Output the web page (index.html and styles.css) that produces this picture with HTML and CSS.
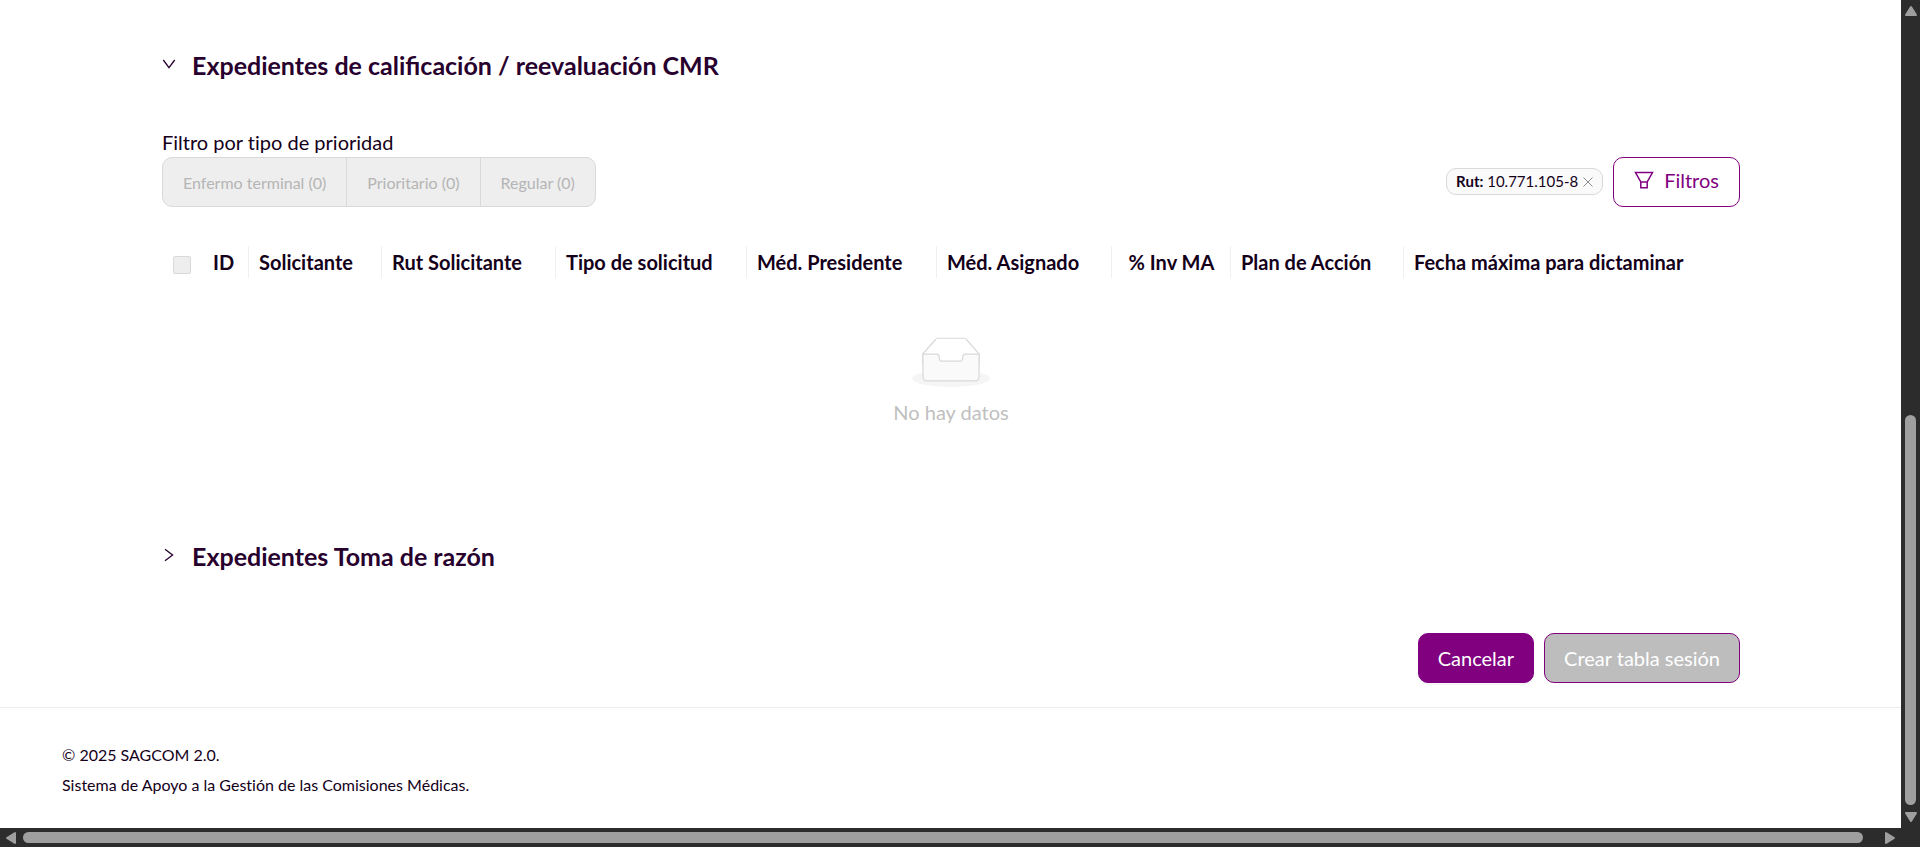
FILE: index.html
```html
<!DOCTYPE html>
<html lang="es">
<head>
<meta charset="utf-8">
<title>SAGCOM 2.0</title>
<link rel="stylesheet" href="styles.css">
</head>
<body>
<div class="window">
  <div class="page">
    <main class="content">
      <section class="panel">
        <h2 class="panel-title">
          <button class="panel-toggle" type="button" aria-expanded="true">
            <svg class="chevron" viewBox="0 0 14 14" aria-hidden="true"><path d="M1.3 3 7 10.6 12.7 3"/></svg>
            <span>Expedientes de calificación / reevaluación CMR</span>
          </button>
        </h2>
        <div class="panel-body">
          <p class="filter-label" id="priority-label">Filtro por tipo de prioridad</p>
          <div class="toolbar">
            <div class="segmented" role="group" aria-labelledby="priority-label">
              <button type="button" disabled>Enfermo terminal (0)</button>
              <button type="button" disabled>Prioritario (0)</button>
              <button type="button" disabled>Regular (0)</button>
            </div>
            <div class="filters">
              <span class="tag"><span><b>Rut:</b> 10.771.105-8</span>
                <button class="tag-close" type="button" aria-label="Quitar filtro"><svg viewBox="0 0 10 10" aria-hidden="true"><path d="M.5.5 9.5 9.5M9.5.5.5 9.5"/></svg></button>
              </span>
              <button class="btn btn-outline" type="button">
                <svg class="funnel" viewBox="0 0 20 20" aria-hidden="true"><path d="M1.5 2.5H18.5L13.2 12V17.7H6.8V12ZM6.8 12H13.2"/></svg>
                <span>Filtros</span>
              </button>
            </div>
          </div>
          <table class="records">
            <colgroup>
              <col class="c-check"><col class="c-id"><col class="c-name"><col class="c-rut"><col class="c-type"><col class="c-chair"><col class="c-assigned"><col class="c-inv"><col class="c-plan"><col>
            </colgroup>
            <thead>
              <tr>
                <th class="check"><input type="checkbox" aria-label="Seleccionar todo" disabled></th>
                <th>ID</th>
                <th>Solicitante</th>
                <th>Rut Solicitante</th>
                <th>Tipo de solicitud</th>
                <th>Méd. Presidente</th>
                <th>Méd. Asignado</th>
                <th class="center">% Inv MA</th>
                <th>Plan de Acción</th>
                <th>Fecha máxima para dictaminar</th>
              </tr>
            </thead>
            <tbody>
              <tr>
                <td colspan="10">
                  <div class="empty">
                    <svg class="empty-icon" viewBox="0 0 64 41" aria-hidden="true">
                      <g transform="translate(0 1)" fill="none" fill-rule="evenodd">
                        <ellipse fill="#f5f5f5" cx="32" cy="33" rx="32" ry="7"/>
                        <g fill-rule="nonzero" stroke="#d9d9d9">
                          <path d="M55 12.76L44.854 1.258C44.367.474 43.656 0 42.907 0H21.093c-.749 0-1.46.474-1.947 1.257L9 12.761V22h46v-9.24z"/>
                          <path fill="#fafafa" d="M41.613 15.931c0-1.605.994-2.93 2.227-2.931H55v18.137C55 33.26 53.68 35 52.05 35h-40.1C10.32 35 9 33.259 9 31.137V13h11.16c1.233 0 2.227 1.323 2.227 2.928v.022c0 1.605 1.005 2.901 2.237 2.901h14.752c1.232 0 2.237-1.308 2.237-2.913v-.007z"/>
                        </g>
                      </g>
                    </svg>
                    <span>No hay datos</span>
                  </div>
                </td>
              </tr>
            </tbody>
          </table>
        </div>
      </section>
      <section class="panel">
        <h2 class="panel-title">
          <button class="panel-toggle" type="button" aria-expanded="false">
            <svg class="chevron" viewBox="0 0 14 14" aria-hidden="true"><path d="M3 1.3 10.6 7 3 12.7"/></svg>
            <span>Expedientes Toma de razón</span>
          </button>
        </h2>
      </section>
      <div class="actions">
        <button class="btn btn-primary" type="button">Cancelar</button>
        <button class="btn btn-disabled" type="button" disabled>Crear tabla sesión</button>
      </div>
    </main>
    <footer class="footer">
      <p>© 2025 SAGCOM 2.0.</p>
      <p>Sistema de Apoyo a la Gestión de las Comisiones Médicas.</p>
    </footer>
  </div>
  <div class="bar bar-v" aria-hidden="true">
    <svg class="arrow" viewBox="0 0 14 12"><path d="M7 2 12 10H2Z"/></svg>
    <div class="track"><div class="thumb"></div></div>
    <svg class="arrow" viewBox="0 0 14 12"><path d="M7 10 12 2H2Z"/></svg>
  </div>
  <div class="bar bar-h" aria-hidden="true">
    <svg class="arrow" viewBox="0 0 12 14"><path d="M2 7 10 2V12Z"/></svg>
    <div class="track"><div class="thumb"></div></div>
    <svg class="arrow" viewBox="0 0 12 14"><path d="M10 7 2 2V12Z"/></svg>
  </div>
  <div class="corner"></div>
</div>
</body>
</html>
```

FILE: styles.css
```css
* {
  box-sizing: border-box;
}

body {
  margin: 0;
  background: #fff;
  color: #14001a;
  font: 20px/30px Lato, "Open Sans", sans-serif;
  font-variant-ligatures: none;
}

button {
  font: inherit;
  font-variant-ligatures: inherit;
  color: inherit;
}

p,
h2 {
  margin: 0;
}

.window {
  display: grid;
  grid-template: minmax(0, 1fr) 19px / minmax(0, 1fr) 19px;
  height: 100vh;
}

.page {
  display: flex;
  flex-direction: column;
  overflow: hidden;
}

.content {
  flex: 1;
  padding: 45px 161px 24px 162px;
}

.panel-title {
  font-size: 25px;
  line-height: 40px;
  font-weight: 700;
  font-variant-ligatures: normal;
}

.panel-toggle {
  display: flex;
  gap: 16px;
  padding: 0;
  border: 0;
  background: none;
  color: #28002e;
}

.chevron {
  width: 14px;
  height: 14px;
  margin-top: 12px;
  fill: none;
  stroke: currentColor;
  stroke-width: 1.3;
}

.panel-body {
  padding: 43px 0 109px;
}

.toolbar {
  display: flex;
  justify-content: space-between;
  margin-bottom: 32px;
}

.filter-label {
  line-height: 29px;
}

.segmented {
  display: flex;
  height: 50px;
  border: 1px solid #d9d9d9;
  border-radius: 10px;
  background: #eee;
}

.segmented button {
  padding: 2px 20px 0;
  border: 0;
  background: none;
  color: #b5b5b5;
  font-size: 16px;
}

.segmented button + button {
  border-left: 1px solid #d9d9d9;
}

.filters {
  display: flex;
  align-items: center;
  gap: 10px;
}

.tag {
  display: flex;
  align-items: center;
  gap: 5px;
  height: 27px;
  margin-bottom: 2px;
  padding: 0 9px;
  border: 1px solid #d9d9d9;
  border-radius: 10px;
  background: #fafafa;
  font-size: 15px;
  line-height: 25px;
}

.tag-close {
  display: flex;
  padding: 2px 0 0;
  border: 0;
  background: none;
  color: #8c8c8c;
}

.tag-close svg {
  width: 10px;
  height: 10px;
  fill: none;
  stroke: currentColor;
}

.btn {
  display: flex;
  align-items: center;
  gap: 10px;
  height: 50px;
  padding: 0 19px;
  border: 1px solid #800080;
  border-radius: 10px;
}

.btn-outline {
  padding: 0 20px 4px;
  background: #fff;
  color: #800080;
}

.btn-primary {
  background: #800080;
  color: #fff;
  box-shadow: 0 2px 0 rgba(5, 0, 6, 0.04);
}

.btn-disabled {
  background: #bdbdbd;
  color: #fff;
}

.funnel {
  width: 20px;
  height: 20px;
  fill: none;
  stroke: currentColor;
  stroke-width: 1.5;
}

.records {
  width: 100%;
  border-collapse: collapse;
  table-layout: fixed;
}

.records th {
  height: 46px;
  padding: 0 10px;
  background: linear-gradient(#f0f0f0, #f0f0f0) right / 1px 32px no-repeat;
  text-align: left;
  white-space: nowrap;
}

.records th:last-child,
.records th.check {
  background: none;
}

.records th.check {
  padding-left: 11px;
}

.records th.center {
  padding: 0 8px;
  text-align: center;
}

.records td {
  padding: 0;
}

.c-check { width: 41px; }
.c-id { width: 46px; }
.c-name { width: 133px; }
.c-rut { width: 174px; }
.c-type { width: 191px; }
.c-chair { width: 190px; }
.c-assigned { width: 175px; }
.c-inv { width: 119px; }
.c-plan { width: 173px; }

.check input {
  display: block;
  appearance: none;
  width: 18px;
  height: 18px;
  margin: 5px 0 0;
  border: 1px solid #d9d9d9;
  border-radius: 2px;
  background: #eee;
}

.empty {
  display: flex;
  flex-direction: column;
  align-items: center;
  gap: 10px;
  padding-top: 52px;
  color: #bfbfbf;
}

.empty-icon {
  width: 78px;
  height: 50px;
}

.actions {
  display: flex;
  justify-content: flex-end;
  gap: 10px;
  padding-top: 57px;
}

.footer {
  padding: 32px 62px 28px;
  border-top: 1px solid #ececec;
  font-size: 16px;
}

.bar {
  display: flex;
  align-items: center;
  background: #2c2c2c;
}

.bar-v {
  flex-direction: column;
  padding: 4px 0;
}

.bar-h {
  padding: 0 4px;
}

.corner {
  background: #2c2c2c;
}

.arrow {
  width: 14px;
  height: 14px;
  fill: #9f9f9f;
  stroke: #9f9f9f;
  stroke-width: 2;
  stroke-linejoin: round;
}

.track {
  display: flex;
  flex: 1;
}

.bar-v .track {
  align-items: flex-end;
  padding: 7px 0 5px;
}

.bar-h .track {
  padding: 0 20px 0 5px;
}

.thumb {
  border-radius: 6px;
  background: #9f9f9f;
}

.bar-v .thumb {
  width: 11px;
  height: 50%;
}

.bar-h .thumb {
  width: 100%;
  height: 11px;
}
```
